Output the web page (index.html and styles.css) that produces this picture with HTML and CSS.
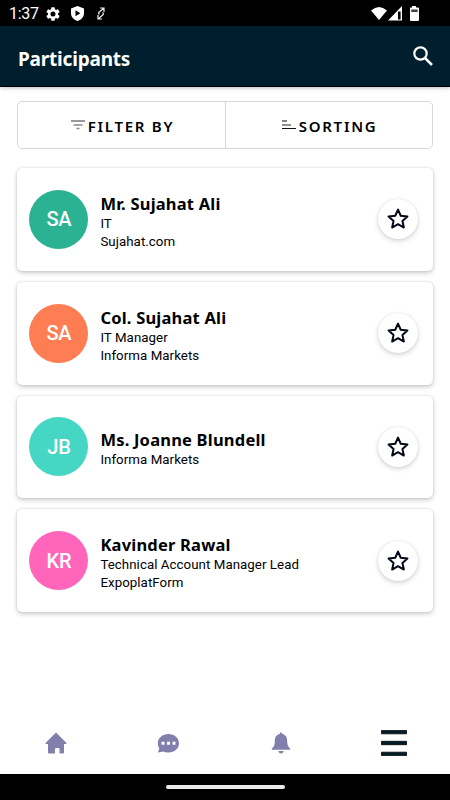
FILE: index.html
```html
<!DOCTYPE html>
<html lang="en">
<head>
<meta charset="utf-8">
<title>Participants</title>
<link rel="stylesheet" href="styles.css">
</head>
<body>
<svg width="0" height="0" class="symbols">
  <symbol id="star" viewBox="0 0 24 24"><path d="M12 2.6l2.75 6.15 6.7.72-5 4.5 1.4 6.6L12 17.2l-5.85 3.37 1.4-6.6-5-4.5 6.7-.72z" fill="none" stroke="#020815" stroke-width="2" stroke-linejoin="round"/></symbol>
</svg>
<div class="status">
  <span class="time">1:37</span>
  <svg class="gear" viewBox="2 2 20 20" width="14" height="14"><path fill="#fff" d="M19.14 12.94c.04-.3.06-.61.06-.94 0-.32-.02-.64-.07-.94l2.03-1.58a.49.49 0 0 0 .12-.61l-1.92-3.32a.488.488 0 0 0-.59-.22l-2.39.96c-.5-.38-1.03-.7-1.62-.94l-.36-2.54a.484.484 0 0 0-.48-.41h-3.84c-.24 0-.43.17-.47.41l-.36 2.54c-.59.24-1.13.57-1.62.94l-2.39-.96c-.22-.08-.47 0-.59.22L2.74 8.87c-.12.21-.08.47.12.61l2.03 1.58c-.05.3-.09.63-.09.94s.02.64.07.94l-2.03 1.58a.49.49 0 0 0-.12.61l1.92 3.32c.12.22.37.29.59.22l2.39-.96c.5.38 1.03.7 1.62.94l.36 2.54c.05.24.24.41.48.41h3.84c.24 0 .44-.17.47-.41l.36-2.54c.59-.24 1.13-.56 1.62-.94l2.39.96c.22.08.47 0 .59-.22l1.92-3.32c.12-.22.07-.47-.12-.61l-2.01-1.58zM12 15.6A3.6 3.6 0 1 1 12 8.4a3.6 3.6 0 0 1 0 7.2z"/></svg>
  <svg class="shield" viewBox="0 0 13 15" width="13" height="15"><path fill="#fff" d="M6.500 0L13 2.500V7c0 4-2.700 6.800-6.500 8C2.700 13.800 0 11 0 7V2.500z"/><path d="M4.500 4.300L9.300 7.200l-4.800 3z"/></svg>
  <svg class="sync" viewBox="0 0 8 13" width="8" height="13"><path d="M3 1h4v4M7 1L2 5.200q-1 1.200.5 2.300M5 12H1V8M1 12l5-4.200q1-1.200-.5-2.300" fill="none" stroke="#eee" stroke-width="1.200"/></svg>
  <svg class="signals" viewBox="0 0 50 16" width="50" height="16"><path fill="#fff" d="M0 4.500Q8 -2.500 16 4.500L8 14z"/><path fill="#fff" d="M17 14.500L31 0v14.500z"/><path d="M27 5.500h2.600v8H27z"/><path fill="#fff" d="M41 0h4v1.500h2q1 0 1 1V14q0 1-1 1h-7q-1 0-1-1V2.500q0-1 1-1h1z"/><path fill="#444" d="M40.200 3.500h6.500V6h-6.500z"/></svg>
</div>
<header class="bar">
  <h1>Participants</h1>
  <svg viewBox="0 0 20 20" width="20" height="20"><circle cx="7.500" cy="7.500" r="6.200" fill="none" stroke="#fff" stroke-width="2.200"/><path d="M12 12l7 7" stroke="#fff" stroke-width="2.500"/></svg>
</header>
<main>
  <div class="tools">
    <button><svg width="14" height="10" viewBox="0 0 14 10"><path d="M0 1h14" stroke="#555" stroke-width="1.200"/><path d="M2.500 5h9" stroke="#888" stroke-width="1.500"/><path d="M5.500 8.500h3" stroke="#888" stroke-width="1.500"/></svg><span class="filter-label">FILTER BY</span></button>
    <button><svg width="14" height="10" viewBox="0 0 14 10"><path d="M0 1h5M0 8.500h14" stroke="#111" stroke-width="1.200"/><path d="M0 5h9" stroke="#777" stroke-width="1.600"/></svg><span class="sort-label">SORTING</span></button>
  </div>
  <section class="list">
    <article class="card"><div class="avatar green">SA</div><div class="info"><h2>Mr. Sujahat Ali</h2><p>IT</p><p>Sujahat.com</p></div><button class="fav"><svg width="24" height="24"><use href="#star"/></svg></button></article>
    <article class="card"><div class="avatar orange">SA</div><div class="info"><h2>Col. Sujahat Ali</h2><p>IT Manager</p><p>Informa Markets</p></div><button class="fav"><svg width="24" height="24"><use href="#star"/></svg></button></article>
    <article class="card"><div class="avatar teal">JB</div><div class="info"><h2>Ms. Joanne Blundell</h2><p>Informa Markets</p></div><button class="fav"><svg width="24" height="24"><use href="#star"/></svg></button></article>
    <article class="card"><div class="avatar pink">KR</div><div class="info"><h2>Kavinder Rawal</h2><p>Technical Account Manager Lead</p><p>ExpoplatForm</p></div><button class="fav"><svg width="24" height="24"><use href="#star"/></svg></button></article>
  </section>
</main>
<nav class="tabs">
  <a><svg width="22" height="22" viewBox="0 0 22 22"><path fill="#837fac" d="M11 .5L21.500 11q.3 1-.8 1H19v8.500q0 1-1 1h-3.500V17q0-1-1-1h-2q-1.500 0-1.500 1v4.500H4q-1 0-1-1V12H1.300Q.2 12 .5 11z"/></svg></a>
  <a><svg width="22" height="22" viewBox="0 0 22 22"><path fill="#837fac" d="M11.500 2C17.500 2 22 6 22 11.300s-4.500 9.200-10.500 9.200c-2 0-3.500-.4-5-1.100L.8 20.500l1.500-4C1.300 15 .8 13.200.8 11.300.8 6 5.500 2 11.500 2z"/><path fill="#fff" d="M4.500 9.800h3v3h-3zM10 9.800h3v3h-3zM15.500 9.800h3v3h-3z"/></svg></a>
  <a><svg width="22" height="22" viewBox="0 0 22 22"><path fill="#837fac" d="M11 .3q1 0 1.200 1.700c3.800.7 5 3.600 5 7.200 0 4 1 5.600 3 7.200v1.300H1.800v-1.300c2-1.600 3-3.200 3-7.200 0-3.600 1.200-6.500 5-7.200C10 .3 11 .3 11 .3zM8.300 19h5.400Q13 21.500 11 21.500T8.300 19z"/></svg></a>
  <a class="menu"><svg width="26" height="26" viewBox="0 0 26 26"><path fill="#001b29" stroke="#000" stroke-width=".8" d="M.4.4h25.200v3.400H.4zM.4 11.300h25.200v3.400H.4zM.4 22.200h25.200v3.400H.4z"/></svg></a>
</nav>
<footer class="gesture"><i></i></footer>
</body>
</html>
```

FILE: styles.css
```css
* { box-sizing: border-box; }
body { margin: 0; width: 450px; height: 800px; overflow: hidden; display: flex; flex-direction: column; background: #fff; color: #000; font-family: Roboto, sans-serif; }
svg { display: block; flex: none; }
.symbols { position: absolute; }
h1, h2, p { margin: 0; }
button { padding: 0; border: 0; background: #fff; color: #000; }
.status { height: 26px; background: #000; display: flex; align-items: center; padding: 1px 29px 0 9px; }
.time { color: #fff; font-size: 16px; line-height: 26px; width: 37px; letter-spacing: -.3px; }
.shield { margin-left: 11px; }
.sync { margin-left: 13px; }
.signals { margin-left: auto; }
.bar { height: 61px; flex: none; background: #001f2e; border-bottom: 1px solid #000; box-shadow: 0 1px 4px rgba(0,0,0,.25); display: flex; align-items: center; justify-content: space-between; padding: 5px 17px 0 18px; }
.bar svg { margin-bottom: 5px; }
h1 { color: #fff; font: 700 19px/24px "Noto Sans", sans-serif; letter-spacing: -.2px; }
main { flex: 1; padding: 14px 17.400px 0; }
.tools { height: 48px; display: flex; border: 1px solid #d7d8da; border-radius: 5px; }
.tools button { flex: 1; display: flex; align-items: center; justify-content: center; border-radius: 5px; font: 600 15px/20px "Noto Sans", sans-serif; gap: 3px; padding-top: 1px; }
.tools button svg { margin-bottom: 2px; }
.tools button + button { border-left: 1px solid #d7d8da; border-radius: 0 5px 5px 0; }
.filter-label { letter-spacing: 1.750px; margin-right: -2px; }
.sort-label { letter-spacing: 1.750px; margin-right: -2px; }
.list { display: grid; gap: 11px; padding-top: 19px; }
.card { height: 102.800px; display: flex; align-items: center; border-radius: 5px; background: #fff; box-shadow: 0 2px 5px rgba(0,0,0,.2), 0 0 2px rgba(0,0,0,.16); padding: 0 14.600px 0 12px; }
.avatar { width: 59px; height: 59px; border-radius: 50%; color: #fff; display: flex; align-items: center; justify-content: center; font-size: 20px; font-weight: 500; letter-spacing: -.3px; flex: none; }
.green { background: #2bb293; }
.orange { background: #ff7d52; }
.teal { background: #45d7c4; }
.pink { background: #ff66bb; }
.info { margin-left: 12px; flex: 1; padding-top: 4px; }
h2 { font: 700 16.500px/23px "Noto Sans", sans-serif; white-space: nowrap; letter-spacing: .2px; }
p { font-size: 13.300px; line-height: 18px; letter-spacing: .05px; }
.fav { width: 40px; height: 40px; border-radius: 50%; box-shadow: 0 2px 5px rgba(0,0,0,.16), 0 0 2px rgba(0,0,0,.1); display: flex; align-items: center; justify-content: center; }
.fav svg { margin: 0 1px 0 0; }
.tabs { height: 61px; flex: none; display: grid; grid-template-columns: repeat(4, 1fr); background: #fff; padding-bottom: 2px; }
.tabs a { display: flex; align-items: center; justify-content: center; padding-right: 1px; }
.tabs .menu { padding: 0; }
.gesture { height: 26px; flex: none; background: #000; display: flex; justify-content: center; padding-top: 11px; }
.gesture i { width: 119px; height: 4px; border-radius: 2px; background: #ececec; }
```
